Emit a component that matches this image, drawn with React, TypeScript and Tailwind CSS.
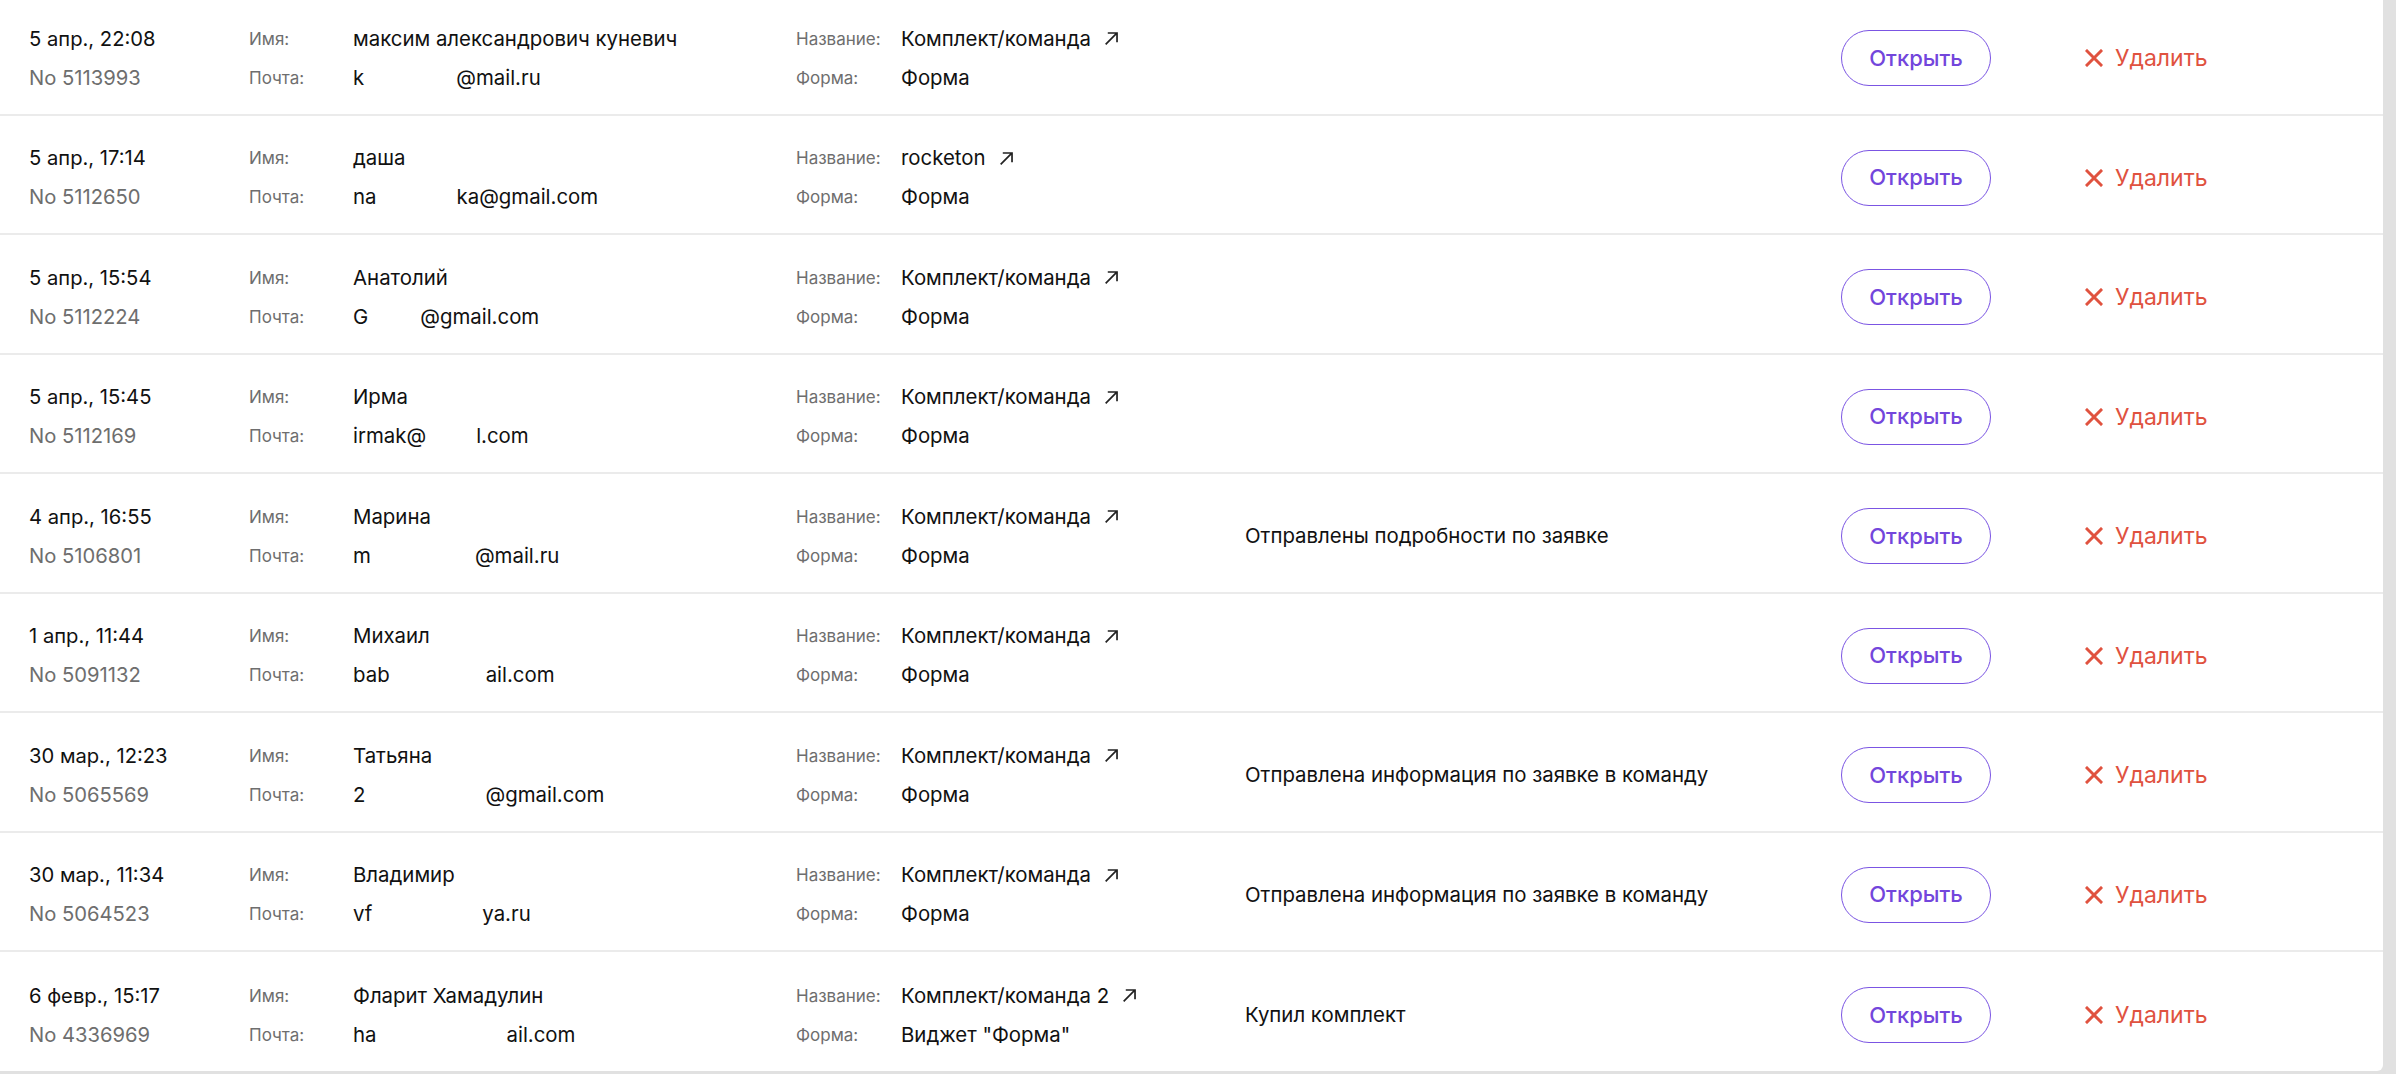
type Lead = {
  date: string;
  no: string;
  name: string;
  mail: [string, number, string];
  title: string;
  form: string;
  note?: string;
};

const leads: Lead[] = [
  { date: "5 апр., 22:08", no: "5113993", name: "максим александрович куневич", mail: ["k", 92, "@mail.ru"], title: "Комплект/команда", form: "Форма" },
  { date: "5 апр., 17:14", no: "5112650", name: "даша", mail: ["na", 80, "ka@gmail.com"], title: "rocketon", form: "Форма" },
  { date: "5 апр., 15:54", no: "5112224", name: "Анатолий", mail: ["G", 52, "@gmail.com"], title: "Комплект/команда", form: "Форма" },
  { date: "5 апр., 15:45", no: "5112169", name: "Ирма", mail: ["irmak@", 50, "l.com"], title: "Комплект/команда", form: "Форма" },
  { date: "4 апр., 16:55", no: "5106801", name: "Марина", mail: ["m", 104, "@mail.ru"], title: "Комплект/команда", form: "Форма", note: "Отправлены подробности по заявке" },
  { date: "1 апр., 11:44", no: "5091132", name: "Михаил", mail: ["bab", 96, "ail.com"], title: "Комплект/команда", form: "Форма" },
  { date: "30 мар., 12:23", no: "5065569", name: "Татьяна", mail: ["2", 120, "@gmail.com"], title: "Комплект/команда", form: "Форма", note: "Отправлена информация по заявке в команду" },
  { date: "30 мар., 11:34", no: "5064523", name: "Владимир", mail: ["vf", 110, "ya.ru"], title: "Комплект/команда", form: "Форма", note: "Отправлена информация по заявке в команду" },
  { date: "6 февр., 15:17", no: "4336969", name: "Фларит Хамадулин", mail: ["ha", 130, "ail.com"], title: "Комплект/команда 2", form: 'Виджет "Форма"', note: "Купил комплект" },
];

function LinkArrow() {
  return (
    <svg width="17" height="17" viewBox="0 0 16 16" fill="none" className="text-[#222]">
      <path d="M2.5 13.5 13 3M4.5 2.8H13.2V11.5" stroke="currentColor" strokeWidth="1.6" />
    </svg>
  );
}

function LeadRow({ lead, last }: { lead: Lead; last: boolean }) {
  return (
    <div
      className={`flex h-[119.5px] items-center pt-[7px] pl-[29px] ${last ? "" : "border-b-2 border-[#ebebeb]"}`}
    >
      <div className="flex w-[220px] flex-col gap-[11px] text-[20.2px] leading-[28px]">
        <span className="text-[#111]">{lead.date}</span>
        <span className="text-[#6e6e6e]">No {lead.no}</span>
      </div>
      <div className="flex w-[104px] flex-col gap-[11px] text-[17px] leading-[28px] text-[#6e6e6e]">
        <span>Имя:</span>
        <span>Почта:</span>
      </div>
      <div className="flex w-[443px] flex-col gap-[11px] text-[20.4px] leading-[28px] text-[#111]">
        <span>{lead.name}</span>
        <span className="flex">
          <span>{lead.mail[0]}</span>
          <span className="inline-block" style={{ width: lead.mail[1] }} />
          <span>{lead.mail[2]}</span>
        </span>
      </div>
      <div className="flex w-[105px] flex-col gap-[11px] text-[17px] leading-[28px] text-[#6e6e6e]">
        <span>Название:</span>
        <span>Форма:</span>
      </div>
      <div className="flex w-[344px] flex-col gap-[11px] text-[20.4px] leading-[28px] text-[#111]">
        <span className="flex items-center gap-[12px]">
          {lead.title}
          <LinkArrow />
        </span>
        <span>{lead.form}</span>
      </div>
      <div className="w-[596px] text-[20.4px] leading-[28px] text-[#111]">{lead.note ?? ""}</div>
      <button
        type="button"
        className="flex h-[56px] w-[150px] items-center justify-center rounded-full border border-[#7b55e3] text-[22px] font-medium text-[#7346dc]"
      >
        Открыть
      </button>
      <button type="button" className="ml-[94px] flex items-center gap-[12px] text-[23px] text-[#e0523f]">
        <svg width="18" height="18" viewBox="0 0 18 18" fill="none">
          <path d="M2 2 16 16M16 2 2 16" stroke="currentColor" strokeWidth="3" strokeLinecap="square" />
        </svg>
        Удалить
      </button>
    </div>
  );
}

export default function App() {
  return (
    <div className="h-[1074px] w-[2396px] overflow-hidden bg-[#e1e1e1] font-['Inter',sans-serif]">
      <div className="h-[1071px] w-[2383px] overflow-hidden rounded-br-[6px] bg-white">
        <div className="-mt-[4px]">
          {leads.map((lead, i) => (
            <LeadRow key={lead.no} lead={lead} last={i === leads.length - 1} />
          ))}
        </div>
      </div>
    </div>
  );
}
